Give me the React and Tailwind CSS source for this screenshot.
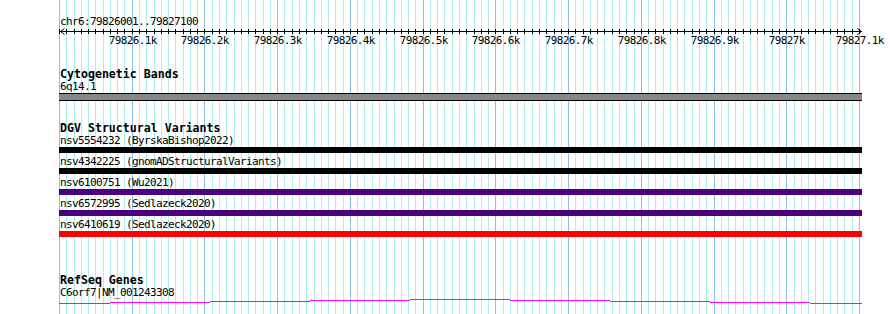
const START = 59;
const SPAN = 800;
const STEPS = 110;
const xAt = (i) => START + Math.round((i * SPAN) / STEPS);

const labels = [
  '79826.1k', '79826.2k', '79826.3k', '79826.4k', '79826.5k', '79826.6k',
  '79826.7k', '79826.8k', '79826.9k', '79827k', '79827.1k',
];

const variants = [
  { name: 'nsv5554232 (ByrskaBishop2022)', color: 'bg-black' },
  { name: 'nsv4342225 (gnomADStructuralVariants)', color: 'bg-black' },
  { name: 'nsv6100751 (Wu2021)', color: 'bg-[#4b0082]' },
  { name: 'nsv6572995 (Sedlazeck2020)', color: 'bg-[#4b0082]' },
  { name: 'nsv6410619 (Sedlazeck2020)', color: 'bg-[#ff0000]' },
];

// intron connector, a very flat hat
const hat = [
  [59, 110, 5], [110, 210, 4], [210, 310, 3], [310, 410, 2], [410, 510, 1],
  [510, 610, 2], [610, 710, 3], [710, 810, 4], [810, 862, 5],
];

const Grid = () => (
  <svg className="absolute inset-0" width="890" height="314">
    {Array.from({ length: STEPS + 1 }, (_, i) => (
      <rect key={i} x={xAt(i)} y="0" width="1" height="314" fill={i % 10 === 0 ? '#88c3e6' : '#afeeee'} />
    ))}
  </svg>
);

const Ruler = () => (
  <svg className="block" width="890" height="20">
    <rect x="60" y="3" width="802" height="1" fill="#000" />
    <path d="M64.5 0.5 L60.5 3.5 L64.5 6.5 M857.5 0.5 L861.5 3.5 L857.5 6.5" stroke="#000" fill="none" />
    {Array.from({ length: STEPS + 1 }, (_, i) => (
      <rect key={i} x={xAt(i)} y="1" width="1" height="5" fill="#000" />
    ))}
    {labels.map((l, i) => (
      <text key={l} x={xAt((i + 1) * 10) + 0.8} y="16" textAnchor="middle" fontSize="11" letterSpacing="-0.62" fill="#000" fontFamily="'DejaVu Sans Mono', monospace">
        {l}
      </text>
    ))}
  </svg>
);

const Small = ({ children, className = '' }) => (
  <div className={`pl-[60px] h-[13px] text-[11px] leading-[13px] tracking-[-0.62px] whitespace-pre ${className}`}>{children}</div>
);

const Title = ({ children, className = '' }) => (
  <div className={`pl-[60px] h-[12px] text-[11.6px] leading-[12px] font-bold whitespace-pre ${className}`}>{children}</div>
);

export default function App() {
  return (
    <div className="relative w-[890px] h-[314px] bg-white overflow-hidden text-black font-['DejaVu_Sans_Mono',monospace]">
      <Grid />
      <div className="relative flex flex-col">
        <Small className="mt-[15px]">chr6:79826001..79827100</Small>
        <Ruler />

        <Title className="mt-[20px]">Cytogenetic Bands</Title>
        <Small>6q14.1</Small>
        <div className="ml-[59px] w-[803px] h-[8px] border-y border-black bg-[#888888]" />

        <Title className="mt-[21px]">DGV Structural Variants</Title>
        {variants.map((v, i) => (
          <div key={v.name} className={i ? 'mt-[2px]' : ''}>
            <Small>{v.name}</Small>
            <div className={`ml-[59px] w-[803px] h-[6px] ${v.color}`} />
          </div>
        ))}

        <Title className="mt-[37px]">RefSeq Genes</Title>
        <Small className="!h-[12px]">C6orf7|NM_001243308</Small>
        <svg className="block" width="890" height="6">
          {hat.map(([a, b, y]) => (
            <rect key={a} x={a} y={y} width={b - a} height="1" fill="#ff00ff" />
          ))}
        </svg>
      </div>
    </div>
  );
}
